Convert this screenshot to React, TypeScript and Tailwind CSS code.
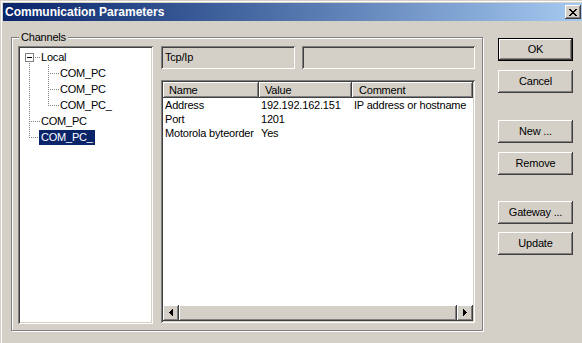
import React from "react";

const raised =
  "shadow-[inset_-1px_-1px_#404040,inset_1px_1px_#ffffff,inset_-2px_-2px_#808080,inset_2px_2px_#d4d0c8]";
const sunken =
  "shadow-[inset_1px_1px_#808080,inset_-1px_-1px_#ffffff,inset_2px_2px_#404040,inset_-2px_-2px_#d4d0c8]";

function CloseGlyph() {
  // classic 8x7 pixel X
  const rows = ["XX....XX", ".XX..XX.", "..XXXX..", "...XX...", "..XXXX..", ".XX..XX.", "XX....XX"];
  return (
    <svg width="8" height="7" shapeRendering="crispEdges">
      {rows.flatMap((r, y) =>
        r.split("").map((c, x) => (c === "X" ? <rect key={`${x}-${y}`} x={x} y={y} width="1" height="1" fill="#000" /> : null))
      )}
    </svg>
  );
}

function Arrow({ dir }: { dir: "left" | "right" }) {
  const cols = dir === "left" ? [1, 3, 5, 7] : [7, 5, 3, 1];
  return (
    <svg width="16" height="16" shapeRendering="crispEdges">
      {cols.map((h, i) => (
        <rect key={i} x={6 + i} y={8 - (h + 1) / 2} width="1" height={h} fill="#000" />
      ))}
    </svg>
  );
}

function Button({ label, isDefault, className }: { label: string; isDefault?: boolean; className?: string }) {
  if (isDefault) {
    return (
      <div className={`w-[75px] h-[23px] border border-black ${className ?? ""}`}>
        <div className={`w-full h-full flex items-center justify-center ${raised}`}>{label}</div>
      </div>
    );
  }
  return <div className={`w-[75px] h-[23px] flex items-center justify-center ${raised} ${className ?? ""}`}>{label}</div>;
}

// dotted connector lines of the tree (inner coords of the tree box)
function TreeLines() {
  const dot = { stroke: "#808080", strokeWidth: 1, strokeDasharray: "1 1" };
  return (
    <svg className="absolute left-0 top-0" width="131" height="100" shapeRendering="crispEdges">
      <line x1="9.5" y1="15" x2="9.5" y2="90" {...dot} />
      <line x1="15" y1="9.5" x2="20" y2="9.5" {...dot} />
      <line x1="11" y1="73.5" x2="20" y2="73.5" {...dot} />
      <line x1="11" y1="89.5" x2="20" y2="89.5" {...dot} />
      <line x1="28.5" y1="17" x2="28.5" y2="58" {...dot} />
      <line x1="30" y1="25.5" x2="39" y2="25.5" {...dot} />
      <line x1="30" y1="41.5" x2="39" y2="41.5" {...dot} />
      <line x1="30" y1="57.5" x2="39" y2="57.5" {...dot} />
      <rect x="5.5" y="5.5" width="8" height="8" fill="#fff" stroke="#808080" />
      <rect x="7" y="9" width="5" height="1" fill="#000" />
    </svg>
  );
}

const treeRows = [
  { label: "Local", level: 0 },
  { label: "COM_PC", level: 1 },
  { label: "COM_PC", level: 1 },
  { label: "COM_PC_", level: 1 },
  { label: "COM_PC", level: 0 },
  { label: "COM_PC_", level: 0, selected: true },
];

const params = [
  { name: "Address", value: "192.192.162.151", comment: "IP address or hostname" },
  { name: "Port", value: "1201", comment: "" },
  { name: "Motorola byteorder", value: "Yes", comment: "" },
];

export default function App() {
  return (
    <div
      className={`w-[582px] h-[343px] bg-[#d4d0c8] flex flex-col pt-[3px] pl-[3px] overflow-hidden text-[11px] tracking-[-0.2px] text-black font-['Liberation_Sans',Arial,sans-serif] shadow-[inset_1px_1px_#d4d0c8,inset_2px_2px_#ffffff]`}
    >
      {/* caption */}
      <div className="h-[18px] shrink-0 flex items-center justify-between pl-[2px] pr-[1px] bg-linear-to-r from-[#0a246a] to-[#a6caf0]">
        <span className="text-white font-bold text-[12px] leading-[18px] tracking-normal">Communication Parameters</span>
        <div className={`w-[16px] h-[14px] flex items-center justify-center bg-[#d4d0c8] ${raised}`}>
          <CloseGlyph />
        </div>
      </div>

      <div className="flex items-start">
        {/* Channels group */}
        <div className="relative mt-[16px] ml-[8px] w-[472px] h-[294px] border border-[#808080] shadow-[inset_1px_1px_#ffffff,1px_1px_#ffffff] pl-[6px] pt-[8px]">
          <span className="absolute -top-[8px] left-[7px] px-[2px] bg-[#d4d0c8] leading-[14px]">Channels</span>
          <div className="flex gap-[8px]">
            {/* tree */}
            <div className={`w-[135px] h-[278px] bg-white p-[2px] ${sunken}`}>
              <div className="relative pt-[1px]">
                <TreeLines />
                {treeRows.map((r, i) => (
                  <div key={i} className={`h-[16px] flex items-center ${r.level === 0 ? "pl-[19px]" : "pl-[38px]"}`}>
                    <span
                      className={`relative h-[15px] leading-[15px] px-[2px] ${r.selected ? "bg-[#0a246a] text-white" : ""}`}
                    >
                      {r.label}
                    </span>
                  </div>
                ))}
              </div>
            </div>

            {/* right side */}
            <div className="w-[314px] flex flex-col">
              <div className="flex gap-[7px] h-[23px]">
                <div className={`w-[134px] h-full flex items-center pl-[4px] ${sunken}`}>Tcp/Ip</div>
                <div className={`flex-1 h-full ${sunken}`} />
              </div>
              <div className={`mt-[11px] h-[243px] bg-white p-[2px] flex flex-col ${sunken}`}>
                <div className="h-[16px] flex shrink-0">
                  <div className={`w-[96px] flex items-center pl-[6px] ${raised} bg-[#d4d0c8]`}>Name</div>
                  <div className={`w-[93px] flex items-center pl-[6px] ${raised} bg-[#d4d0c8]`}>Value</div>
                  <div className={`flex-1 flex items-center pl-[7px] ${raised} bg-[#d4d0c8]`}>Comment</div>
                </div>
                <div className="flex-1">
                  {params.map((p) => (
                    <div key={p.name} className="h-[14px] flex items-center leading-[14px]">
                      <span className="w-[96px] pl-[2px] whitespace-nowrap">{p.name}</span>
                      <span className="w-[93px] pl-[2px] whitespace-nowrap">{p.value}</span>
                      <span className="flex-1 pl-[2px] whitespace-nowrap">{p.comment}</span>
                    </div>
                  ))}
                </div>
                <div className="h-[16px] flex shrink-0">
                  <div className={`w-[16px] h-[16px] bg-[#d4d0c8] ${raised}`}>
                    <Arrow dir="left" />
                  </div>
                  <div className={`flex-1 h-[16px] bg-[#d4d0c8] ${raised}`} />
                  <div className={`w-[16px] h-[16px] bg-[#d4d0c8] ${raised}`}>
                    <Arrow dir="right" />
                  </div>
                </div>
              </div>
            </div>
          </div>
        </div>

        {/* buttons */}
        <div className="ml-[15px] mt-[17px] flex flex-col">
          <Button label="OK" isDefault />
          <Button label="Cancel" className="mt-[9px]" />
          <Button label="New ..." className="mt-[27px]" />
          <Button label="Remove" className="mt-[9px]" />
          <Button label="Gateway ..." className="mt-[26px]" />
          <Button label="Update" className="mt-[8px]" />
        </div>
      </div>
    </div>
  );
}
